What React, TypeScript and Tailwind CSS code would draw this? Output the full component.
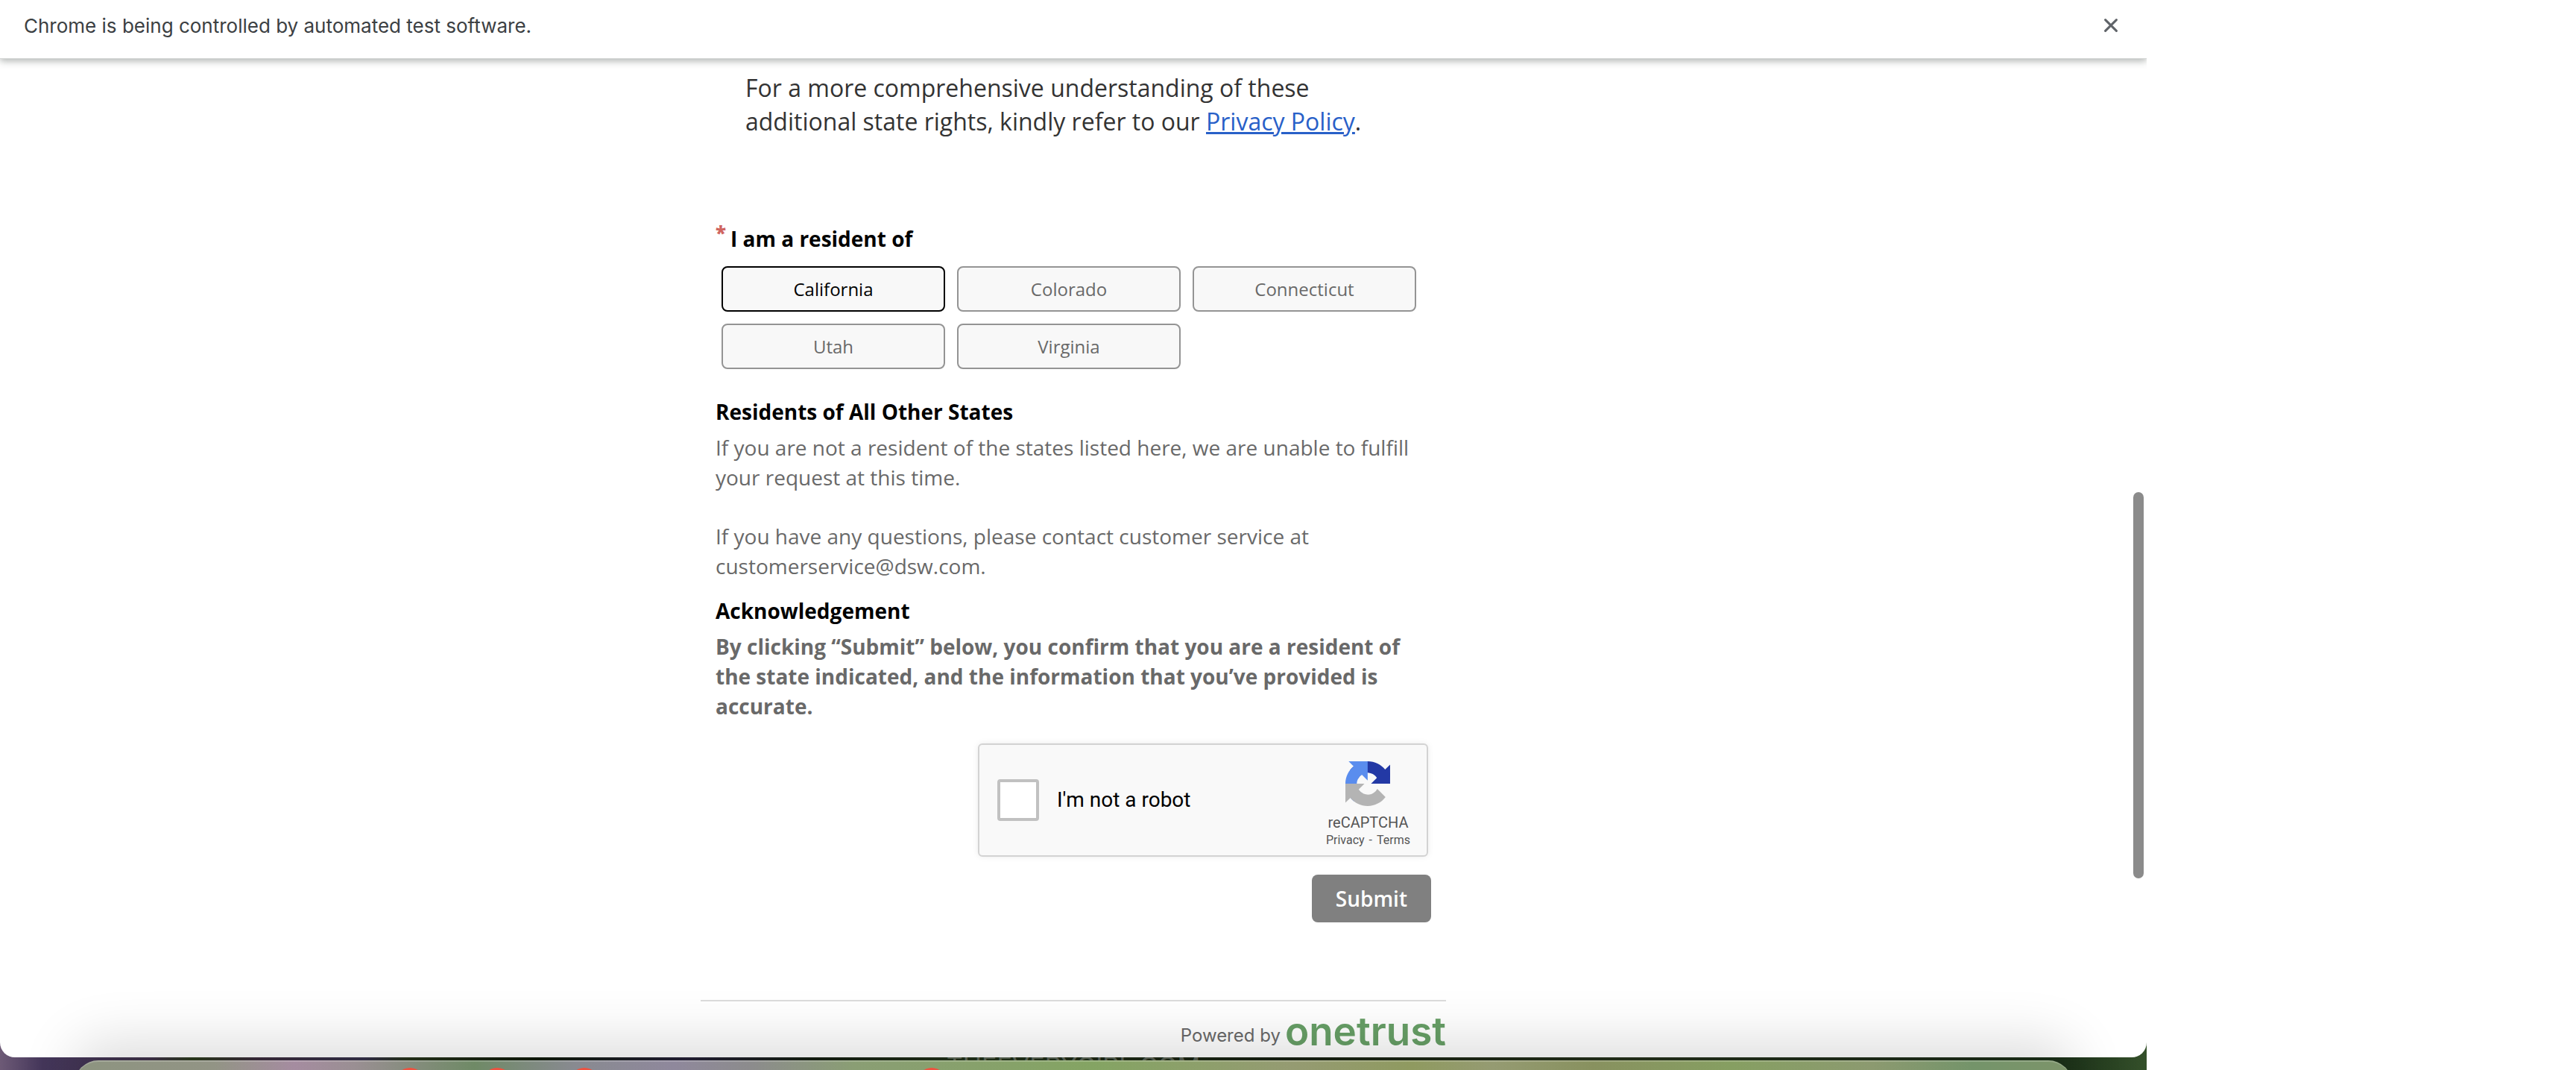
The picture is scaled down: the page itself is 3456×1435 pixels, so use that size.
import { useState } from "react";

const STATES = ["California", "Colorado", "Connecticut", "Utah", "Virginia"];

function InfoBar() {
  return (
    <header className="relative z-10 flex h-[79px] shrink-0 items-start justify-between border-b border-[#d4d6d5] bg-white pt-4 pr-[34px] pl-8 shadow-[0_3px_9px_rgba(60,70,65,0.4)]">
      <p className="font-['Inter'] text-[26px] leading-[38px] text-[#3c4043]">
        Chrome is being controlled by automated test software.
      </p>
      <button type="button" aria-label="Close" className="flex h-9 w-7 items-center justify-center">
        <svg viewBox="0 0 18 18" className="size-[18px]" fill="none" stroke="#5f6368" strokeWidth="3" strokeLinecap="round">
          <path d="M1.6 1.6 16.4 16.4M16.4 1.6 1.6 16.4" />
        </svg>
      </button>
    </header>
  );
}

function RecaptchaLogo() {
  return (
    <svg viewBox="0 0 64 64" className="size-[60px]" aria-hidden="true">
      <path fill="#2339a5" d="M64 31.955l-.033-1.37V4.687l-7.16 7.16C50.948 4.674 42.033.093 32.05.093c-10.4 0-19.622 4.96-25.458 12.64l11.736 11.86a15.55 15.55 0 0 1 4.754-5.334c2.05-1.6 4.952-2.906 8.968-2.906.485 0 .86.057 1.135.163 4.976.393 9.288 3.14 11.828 7.124l-8.307 8.307L64 31.953" />
      <path fill="#5a8dee" d="M31.862.094l-1.37.033H4.594l7.16 7.16C4.58 13.147 0 22.06 0 32.046c0 10.4 4.96 19.622 12.64 25.458L24.5 45.768a15.55 15.55 0 0 1-5.334-4.754c-1.6-2.05-2.906-4.952-2.906-8.968 0-.485.057-.86.163-1.135.393-4.976 3.14-9.288 7.124-11.828l8.307 8.307L31.86.095" />
      <path fill="#b4b4b4" d="M.001 32.045l.033 1.37v25.898l7.16-7.16c5.86 7.173 14.774 11.754 24.76 11.754 10.4 0 19.622-4.96 25.458-12.64l-11.736-11.86a15.55 15.55 0 0 1-4.754 5.334c-2.05 1.6-4.952 2.906-8.968 2.906-.485 0-.86-.057-1.135-.163-4.976-.393-9.288-3.14-11.828-7.124l8.307-8.307c-10.522.04-22.4.066-27.295-.005" />
    </svg>
  );
}

function Recaptcha() {
  return (
    <div className="flex h-[152px] w-[604px] items-center rounded-[6px] border-2 border-[#d3d3d3] bg-[#f9f9f9] pr-[22px] pl-6 font-['Roboto'] shadow-[0_0_8px_rgba(0,0,0,0.08)]">
      <input
        id="robot"
        type="checkbox"
        className="size-14 appearance-none rounded-[4px] border-4 border-[#c1c1c1] bg-white"
      />
      <label htmlFor="robot" className="ml-6 flex-1 text-[28px] leading-9 text-black">
        I'm not a robot
      </label>
      <div className="flex flex-col items-center pt-3 text-[#555]">
        <RecaptchaLogo />
        <span className="mt-2 text-[20px] leading-7">reCAPTCHA</span>
        <div className="flex gap-1.5 text-[16px] leading-5">
          <a href="#privacy">Privacy</a>
          <span>-</span>
          <a href="#terms">Terms</a>
        </div>
      </div>
    </div>
  );
}

function RequestForm() {
  const [selected, setSelected] = useState("California");
  return (
    <form className="mx-auto w-[1000px] px-5 font-['Open_Sans']" onSubmit={(e) => e.preventDefault()}>
      <p className="pt-4 pr-16 pl-10 text-[32px] leading-[45px] text-[#333]">
        For a more comprehensive understanding of these additional state rights, kindly refer to our{" "}
        <a href="#policy" className="text-[#2860c8] underline">Privacy Policy</a>.
      </p>

      <fieldset className="mt-[115px]">
        <legend className="flex items-start text-[28px] leading-10 font-bold text-black">
          <span className="mr-1.5 text-[26px] leading-6 font-extrabold text-[#cf6560]">*</span>
          I am a resident of
        </legend>
        <div className="mt-[17px] grid w-[940px] grid-cols-3 gap-4 pl-2">
          {STATES.map((s) => (
            <button
              key={s}
              type="button"
              aria-pressed={s === selected}
              onClick={() => setSelected(s)}
              className={
                s === selected
                  ? "h-[61px] rounded-[8px] border-2 border-black bg-[#f8f8f8] text-[24px] text-black"
                  : "h-[61px] rounded-[8px] border-2 border-[#949494] bg-[#f8f8f8] text-[24px] text-[#696969]"
              }
            >
              {s}
            </button>
          ))}
        </div>
      </fieldset>

      <section className="mt-[37px] text-[28px] leading-10 text-[#696969]">
        <h2 className="font-bold text-black">Residents of All Other States</h2>
        <p className="mt-2">
          If you are not a resident of the states listed here, we are unable to fulfill your request at this time.
        </p>
        <p className="mt-[39px] pr-16">
          If you have any questions, please contact customer service at customerservice@dsw.com.
        </p>
      </section>

      <section className="mt-5 text-[28px] leading-10 text-[#696969]">
        <h2 className="font-bold text-black">Acknowledgement</h2>
        <p className="mt-2 font-bold">
          By clicking “Submit” below, you confirm that you are a resident of the state indicated, and the
          information that you’ve provided is accurate.
        </p>
      </section>

      <div className="mt-[30px] flex flex-col items-end gap-6">
        <div className="pr-1">
          <Recaptcha />
        </div>
        <button type="submit" className="h-16 rounded-[8px] bg-[#808080] px-8 text-[28px] font-semibold text-white">
          Submit
        </button>
      </div>
    </form>
  );
}

function PoweredBy() {
  return (
    <footer className="mx-auto mt-[104px] flex w-[1000px] items-center justify-end gap-1.5 border-t-2 border-[#dcdcdc] pt-2">
      <span className="pt-3 font-['Inter'] text-[24px] text-[#696969]">Powered by</span>
      <span className="font-['Inter'] text-[53px] leading-[64px] font-semibold text-[#679f66]">onetrust</span>
    </footer>
  );
}

function Dock() {
  return (
    <div
      aria-hidden="true"
      className="absolute top-[calc(100%-13px)] right-[100px] left-[100px] h-[120px] rounded-[32px] border-t-2 border-white/20 bg-[linear-gradient(90deg,#8d9480_0%,#929485_7%,#a58ca0_11%,#9a8f93_14%,#6f8a66_20%,#888a90_25%,#8f889c_30%,#8c8c8c_34%,#8a9e74_39%,#84a463_51%,#959b72_61%,#8f9a60_67%,#959b72_71%,#88915f_76%,#869f62_83%,#8c9a70_90%,#74946a_95%,#7d946a_100%)] shadow-[0_-24px_76px_rgba(0,0,0,0.14)]"
    >
      <i className="absolute top-2 left-[430px] size-10 rounded-full bg-[#ee5240]" />
      <i className="absolute top-2 left-[547px] size-10 rounded-full bg-[#ee5240]" />
      <i className="absolute top-2 left-[664px] size-10 rounded-full bg-[#ee5240]" />
      <i className="absolute top-2 left-[1130px] size-10 rounded-full bg-[#ee5240]" />
    </div>
  );
}

export default function App() {
  return (
    <div className="min-h-screen bg-white">
      <div className="relative flex h-screen w-5/6 flex-col overflow-hidden bg-[linear-gradient(90deg,#6d5a76_0%,#44365a_2%,#40324a_7%,#2b3a1c_9%,#3b2c3c_12%,#35304a_17%,#26331a_19%,#0f1a0a_25%,#242036_32%,#141e10_38%,#22321a_45%,#161f10_60%,#24301a_75%,#1d2c18_90%,#1b3018_96%,#34502a_100%)]">
        <div className="relative flex flex-1 flex-col overflow-hidden rounded-b-[20px] bg-white">
          <InfoBar />
          <main>
            <RequestForm />
            <PoweredBy />
          </main>
          <div className="absolute top-[660px] right-1 h-[518px] w-[14px] rounded-full bg-[#8b8b8b]" />
        </div>
        <div className="flex h-[17px] shrink-0 justify-center overflow-hidden">
          <span className="font-['Inter'] text-[34px] leading-6 text-white/30">THEEVERYGIRL.COM</span>
        </div>
        <Dock />
      </div>
    </div>
  );
}
